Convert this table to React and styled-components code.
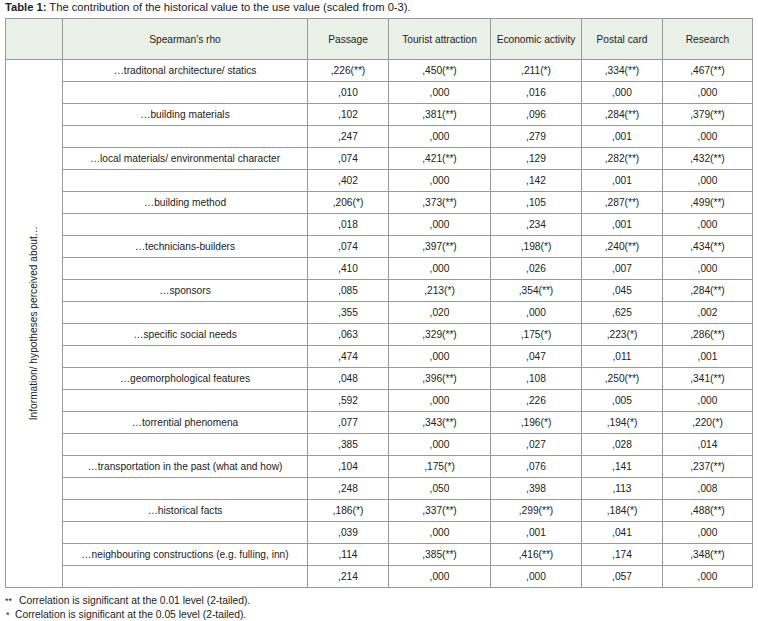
import React from "react";
import styled, { createGlobalStyle } from "styled-components";

const Global = createGlobalStyle`
  html, body { margin: 0; padding: 0; background: #fff; }
  body { font-family: "Liberation Sans", Arial, sans-serif; color: #222; }
`;

const Page = styled.div`
  width: 758px;
  padding: 0 5px;
  box-sizing: border-box;
`;

const Caption = styled.div`
  font-size: 11.2px;
  line-height: 14px;
  height: 14px;
  margin-bottom: 4px;
  white-space: nowrap;
  b { font-weight: bold; }
`;

const Table = styled.table`
  border-collapse: collapse;
  table-layout: fixed;
  width: 748px;
  font-size: 10.2px;
`;

const Th = styled.th`
  background: #ebf1e6;
  border: 1px solid #999;
  font-weight: normal;
  height: 40px;
  padding: 0;
  text-align: center;
  vertical-align: middle;
`;

const Td = styled.td`
  border: 1px solid #999;
  height: 21px;
  padding: 0;
  text-align: center;
  vertical-align: middle;
  white-space: nowrap;
`;

const SideCell = styled.td`
  border: 1px solid #999;
  padding: 0;
  vertical-align: middle;
`;

const Rotated = styled.div`
  writing-mode: vertical-rl;
  transform: rotate(180deg);
  white-space: nowrap;
  margin: 0 auto;
  font-size: 10.2px;
  line-height: 12px;
`;

const Notes = styled.div`
  margin-top: 6px;
  font-size: 10.3px;
  line-height: 13px;
`;

const Note = styled.div`
  display: flex;
  align-items: baseline;
`;

const Mark = styled.span`
  display: inline-block;
  width: ${(p) => p.$w}px;
  font-size: 9px;
  padding-left: ${(p) => p.$pl || 0}px;
  box-sizing: border-box;
`;

const cols = [
  { label: "", w: 57 },
  { label: "Spearman's rho", w: 245 },
  { label: "Passage", w: 81 },
  { label: "Tourist attraction", w: 102 },
  { label: "Economic activity", w: 91 },
  { label: "Postal card", w: 81 },
  { label: "Research", w: 90 },
];

const data = [
  ["…traditonal architecture/ statics", [",226(**)", ",450(**)", ",211(*)", ",334(**)", ",467(**)"], [",010", ",000", ",016", ",000", ",000"]],
  ["…building materials", [",102", ",381(**)", ",096", ",284(**)", ",379(**)"], [",247", ",000", ",279", ",001", ",000"]],
  ["…local materials/ environmental character", [",074", ",421(**)", ",129", ",282(**)", ",432(**)"], [",402", ",000", ",142", ",001", ",000"]],
  ["…building method", [",206(*)", ",373(**)", ",105", ",287(**)", ",499(**)"], [",018", ",000", ",234", ",001", ",000"]],
  ["…technicians-builders", [",074", ",397(**)", ",198(*)", ",240(**)", ",434(**)"], [",410", ",000", ",026", ",007", ",000"]],
  ["…sponsors", [",085", ",213(*)", ",354(**)", ",045", ",284(**)"], [",355", ",020", ",000", ",625", ",002"]],
  ["…specific social needs", [",063", ",329(**)", ",175(*)", ",223(*)", ",286(**)"], [",474", ",000", ",047", ",011", ",001"]],
  ["…geomorphological features", [",048", ",396(**)", ",108", ",250(**)", ",341(**)"], [",592", ",000", ",226", ",005", ",000"]],
  ["…torrential phenomena", [",077", ",343(**)", ",196(*)", ",194(*)", ",220(*)"], [",385", ",000", ",027", ",028", ",014"]],
  ["…transportation in the past (what and how)", [",104", ",175(*)", ",076", ",141", ",237(**)"], [",248", ",050", ",398", ",113", ",008"]],
  ["…historical facts", [",186(*)", ",337(**)", ",299(**)", ",184(*)", ",488(**)"], [",039", ",000", ",001", ",041", ",000"]],
  ["…neighbouring constructions (e.g. fulling, inn)", [",114", ",385(**)", ",416(**)", ",174", ",348(**)"], [",214", ",000", ",000", ",057", ",000"]],
];

export default function App() {
  const rows = [];
  data.forEach(([label, r, p], i) => {
    rows.push(
      <tr key={`r${i}`}>
        {i === 0 && (
          <SideCell rowSpan={data.length * 2}>
            <Rotated>Information/ hypotheses perceived about…</Rotated>
          </SideCell>
        )}
        <Td>{label}</Td>
        {r.map((v, j) => (
          <Td key={j}>{v}</Td>
        ))}
      </tr>
    );
    rows.push(
      <tr key={`p${i}`}>
        <Td></Td>
        {p.map((v, j) => (
          <Td key={j}>{v}</Td>
        ))}
      </tr>
    );
  });

  return (
    <Page>
      <Global />
      <Caption>
        <b>Table 1:</b> The contribution of the historical value to the use value (scaled from 0-3).
      </Caption>
      <Table>
        <colgroup>
          {cols.map((c, i) => (
            <col key={i} style={{ width: c.w }} />
          ))}
        </colgroup>
        <thead>
          <tr>
            {cols.map((c, i) => (
              <Th key={i}>{c.label}</Th>
            ))}
          </tr>
        </thead>
        <tbody>{rows}</tbody>
      </Table>
      <Notes>
        <Note>
          <Mark $w={14}>**</Mark>
          <span>Correlation is significant at the 0.01 level (2-tailed).</span>
        </Note>
        <Note>
          <Mark $w={10} $pl={1}>*</Mark>
          <span>Correlation is significant at the 0.05 level (2-tailed).</span>
        </Note>
      </Notes>
    </Page>
  );
}
